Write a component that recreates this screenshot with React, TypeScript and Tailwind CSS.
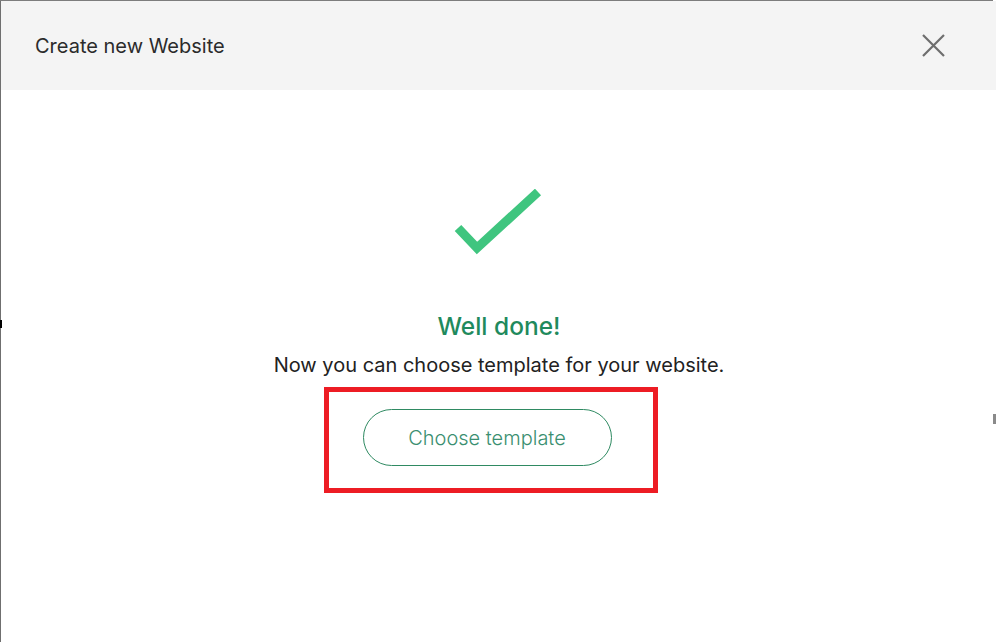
function CheckMark() {
  return (
    <svg width="90" height="74" viewBox="0 0 90 74" fill="none" className="block">
      <path d="M5 39 L24 59 L85 3" stroke="#3fc57f" strokeWidth="9" strokeLinecap="butt" strokeLinejoin="miter" />
    </svg>
  )
}

function CloseIcon() {
  return (
    <svg width="23" height="23" viewBox="0 0 23 23" fill="none" className="block">
      <path d="M1 1 L22 22 M22 1 L1 22" stroke="#6e6e6e" strokeWidth="2.2" />
    </svg>
  )
}

export default function App() {
  return (
    <div
      className="relative flex h-[642px] w-[997px] flex-col overflow-hidden bg-white"
      style={{ fontFamily: 'Inter, "Noto Sans", sans-serif' }}
    >
      <div className="h-px w-[993px] bg-[#7d7d7d]" />
      <div className="flex min-h-0 flex-1">
        <div className="w-px bg-[#6f6f6f]" />
        <div className="flex min-w-0 flex-1 flex-col">
          <header className="mr-[1px] flex h-[89px] items-center justify-between bg-[#f4f4f4] pl-[34px] pr-[51px]">
            <h1 className="text-[20px] font-normal text-[#2b2b2b]">Create new Website</h1>
            <button>
              <CloseIcon />
            </button>
          </header>
          <main className="flex flex-1 flex-col items-center pt-[99px]">
            <div className="ml-[-2px]">
              <CheckMark />
            </div>
            <h2 className="mt-[48px] text-[24.5px] font-[460] leading-[30px] text-[#1f8a5d]">Well done!</h2>
            <p className="mt-[11px] text-[20px] leading-[26px] text-[#222]">
              Now you can choose template for your website.
            </p>
            <div className="mt-[9px] ml-[-16px] flex h-[106px] w-[334px] items-start justify-center border-[5px] border-[#ed1c24] pt-[17px]">
              <button className="ml-[-8px] flex h-[57px] w-[249px] items-center justify-center rounded-full border border-[#2f8a62] text-[20px] font-light text-[#3a8f70]">
                Choose template
              </button>
            </div>
          </main>
        </div>
      </div>
      <div className="absolute left-0 top-[320px] h-[8px] w-[2px] bg-black" />
      <div className="absolute right-[1px] top-[414px] h-[10px] w-[3px] bg-[#8a8a8a]" />
    </div>
  )
}
